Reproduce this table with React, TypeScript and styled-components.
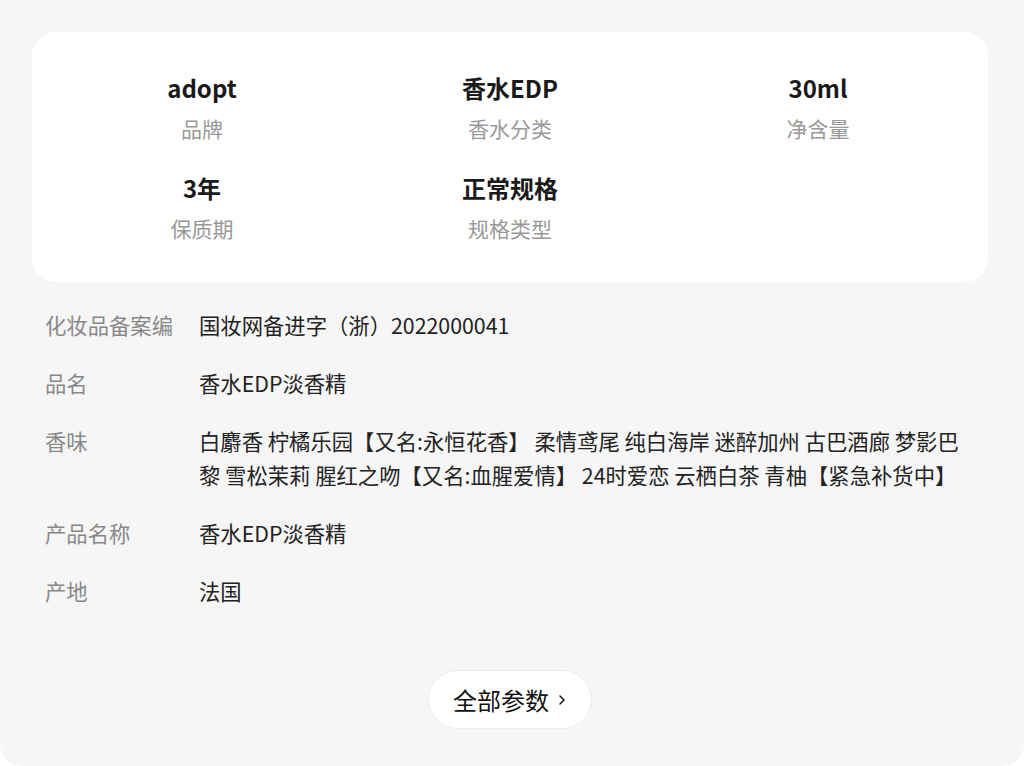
import React from 'react'
import styled, { createGlobalStyle } from 'styled-components';

const GlobalStyle = createGlobalStyle`
  html, body {
    margin: 0;
    padding: 0;
    background: #ffffff;
  }
  body {
    font-family: "Noto Sans CJK SC", "Noto Sans", sans-serif;
  }
`;

const Page = styled.div`
  width: 1024px;
  height: 766px;
  box-sizing: border-box;
  background: #f6f6f6;
  border-radius: 0 0 22px 22px;
  padding: 32px 36px 37px 32px;
  display: flex;
  flex-direction: column;
`;

const SummaryCard = styled.div`
  background: #ffffff;
  border-radius: 24px;
  padding: 39px 16px 39px;
  display: grid;
  grid-template-columns: repeat(3, 1fr);
  row-gap: 28px;
`;

const SummaryItem = styled.div`
  display: flex;
  flex-direction: column;
  align-items: center;
`;

const SummaryValue = styled.div`
  font-size: 24px;
  line-height: 34px;
  font-weight: 700;
  color: #1a1a1a;
`;

const SummaryLabel = styled.div`
  margin-top: 8px;
  font-size: 21px;
  line-height: 30px;
  color: #999999;
`;

const ParamList = styled.div`
  margin-top: 14px;
  padding: 0 13px 0 13px;
  display: flex;
  flex-direction: column;
`;

const ParamRow = styled.div`
  display: flex;
  padding: 12px 0;
  font-size: 21.33px;
  line-height: 34px;
`;

const ParamName = styled.div`
  flex: 0 0 154px;
  color: #888888;
  white-space: nowrap;
  overflow: hidden;
`;

const ParamValue = styled.div`
  flex: 1;
  color: #222222;
  word-break: break-all;
`;

const Footer = styled.div`
  margin-top: auto;
  display: flex;
  justify-content: center;
`;

const AllButton = styled.button`
  display: flex;
  align-items: center;
  gap: 8px;
  height: 59px;
  padding: 0 24px;
  background: #ffffff;
  border: 1px solid #ececec;
  border-radius: 30px;
  font-family: inherit;
  font-size: 24px;
  font-weight: 400;
  color: #111111;
  cursor: pointer;
`;

const summary = [
  { value: 'adopt', label: '品牌' },
  { value: '香水EDP', label: '香水分类' },
  { value: '30ml', label: '净含量' },
  { value: '3年', label: '保质期' },
  { value: '正常规格', label: '规格类型' },
];

const params = [
  { name: '化妆品备案编', value: '国妆网备进字（浙）2022000041' },
  { name: '品名', value: '香水EDP淡香精' },
  {
    name: '香味',
    value:
      '白麝香 柠橘乐园【又名:永恒花香】 柔情鸢尾 纯白海岸 迷醉加州 古巴酒廊 梦影巴黎 雪松茉莉 腥红之吻【又名:血腥爱情】 24时爱恋 云栖白茶 青柚【紧急补货中】',
  },
  { name: '产品名称', value: '香水EDP淡香精' },
  { name: '产地', value: '法国' },
];

export default function App() {
  return (
    <>
      <GlobalStyle />
      <Page>
        <SummaryCard>
          {summary.map((s) => (
            <SummaryItem key={s.label}>
              <SummaryValue>{s.value}</SummaryValue>
              <SummaryLabel>{s.label}</SummaryLabel>
            </SummaryItem>
          ))}
        </SummaryCard>

        <ParamList>
          {params.map((p) => (
            <ParamRow key={p.name}>
              <ParamName>{p.name}</ParamName>
              <ParamValue>{p.value}</ParamValue>
            </ParamRow>
          ))}
        </ParamList>

        {/* bottom button */}
        <Footer>
          <AllButton>
            全部参数
            <svg width="10" height="16" viewBox="0 0 10 16" fill="none">
              <path d="M3 4l4 4-4 4" stroke="#111111" strokeWidth="1.5" strokeLinecap="round" strokeLinejoin="round" />
            </svg>
          </AllButton>
        </Footer>
      </Page>
    </>
  )
}
